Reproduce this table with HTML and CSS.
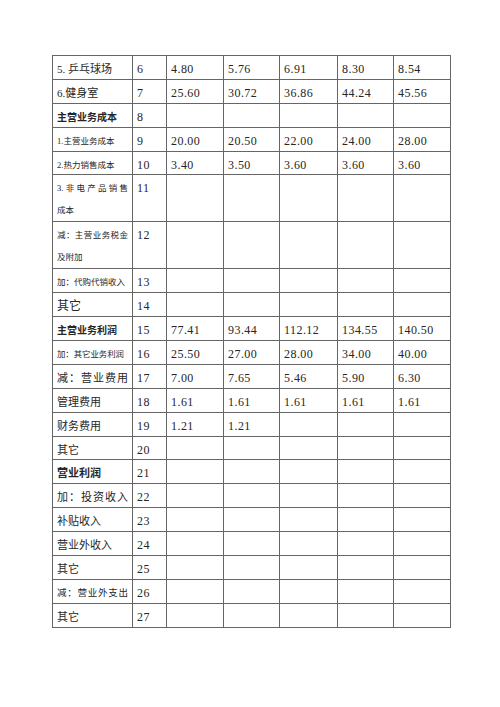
FILE: index.html
```html
<!DOCTYPE html>
<html lang="zh">
<head>
<meta charset="utf-8">
<link rel="stylesheet" href="styles.css">
</head>
<body>
<div class="page">
<table class="sheet">
<colgroup>
<col class="c-label"><col class="c-no"><col class="c-v1"><col class="c-v2"><col class="c-v3"><col class="c-v4"><col class="c-v5">
</colgroup>
<tbody>
<tr><td class="lbl t-md">5. 乒乓球场</td><td class="num">6</td><td class="num">4.80</td><td class="num">5.76</td><td class="num">6.91</td><td class="num">8.30</td><td class="num">8.54</td></tr>
<tr><td class="lbl t-md">6.健身室</td><td class="num">7</td><td class="num">25.60</td><td class="num">30.72</td><td class="num">36.86</td><td class="num">44.24</td><td class="num">45.56</td></tr>
<tr><td class="lbl t-b">主营业务成本</td><td class="num">8</td><td></td><td></td><td></td><td></td><td></td></tr>
<tr><td class="lbl t-sm">1.主营业务成本</td><td class="num">9</td><td class="num">20.00</td><td class="num">20.50</td><td class="num">22.00</td><td class="num">24.00</td><td class="num">28.00</td></tr>
<tr><td class="lbl t-sm">2.热力销售成本</td><td class="num">10</td><td class="num">3.40</td><td class="num">3.50</td><td class="num">3.60</td><td class="num">3.60</td><td class="num">3.60</td></tr>
<tr><td class="lbl t-sm tall"><span class="ln just">3.非电产品销售</span><span class="ln">成本</span></td><td class="num">11</td><td></td><td></td><td></td><td></td><td></td></tr>
<tr><td class="lbl t-sm tall"><span class="ln just">减：主营业务税金</span><span class="ln">及附加</span></td><td class="num">12</td><td></td><td></td><td></td><td></td><td></td></tr>
<tr><td class="lbl t-sm">加：代购代销收入</td><td class="num">13</td><td></td><td></td><td></td><td></td><td></td></tr>
<tr><td class="lbl t-xl">其它</td><td class="num">14</td><td></td><td></td><td></td><td></td><td></td></tr>
<tr><td class="lbl t-b">主营业务利润</td><td class="num">15</td><td class="num">77.41</td><td class="num">93.44</td><td class="num">112.12</td><td class="num">134.55</td><td class="num">140.50</td></tr>
<tr><td class="lbl t-xs">加：其它业务利润</td><td class="num">16</td><td class="num">25.50</td><td class="num">27.00</td><td class="num">28.00</td><td class="num">34.00</td><td class="num">40.00</td></tr>
<tr><td class="lbl t-md just1">减：营业费用</td><td class="num">17</td><td class="num">7.00</td><td class="num">7.65</td><td class="num">5.46</td><td class="num">5.90</td><td class="num">6.30</td></tr>
<tr><td class="lbl t-md">管理费用</td><td class="num">18</td><td class="num">1.61</td><td class="num">1.61</td><td class="num">1.61</td><td class="num">1.61</td><td class="num">1.61</td></tr>
<tr><td class="lbl t-md">财务费用</td><td class="num">19</td><td class="num">1.21</td><td class="num">1.21</td><td></td><td></td><td></td></tr>
<tr><td class="lbl t-md">其它</td><td class="num">20</td><td></td><td></td><td></td><td></td><td></td></tr>
<tr><td class="lbl t-b t-b-lg">营业利润</td><td class="num">21</td><td></td><td></td><td></td><td></td><td></td></tr>
<tr><td class="lbl t-md just1">加：投资收入</td><td class="num">22</td><td></td><td></td><td></td><td></td><td></td></tr>
<tr><td class="lbl t-md">补贴收入</td><td class="num">23</td><td></td><td></td><td></td><td></td><td></td></tr>
<tr><td class="lbl t-md">营业外收入</td><td class="num">24</td><td></td><td></td><td></td><td></td><td></td></tr>
<tr><td class="lbl t-md">其它</td><td class="num">25</td><td></td><td></td><td></td><td></td><td></td></tr>
<tr><td class="lbl t-s2 just1">减：营业外支出</td><td class="num">26</td><td></td><td></td><td></td><td></td><td></td></tr>
<tr><td class="lbl t-md">其它</td><td class="num">27</td><td></td><td></td><td></td><td></td><td></td></tr>
</tbody>
</table>
</div>
</body>
</html>
```
FILE: styles.css
```css
html, body {
  margin: 0;
  padding: 0;
  background: #ffffff;
}
.page {
  padding: 55px 0 0 52px;
}
.sheet {
  border-collapse: collapse;
  table-layout: fixed;
  width: 399px;
  color: #262626;
}
.c-label { width: 80px; }
.c-no { width: 34px; }
.c-v1 { width: 57px; }
.c-v2 { width: 56px; }
.c-v3 { width: 58px; }
.c-v4 { width: 56px; }
.c-v5 { width: 57px; }
.sheet td {
  border: 1px solid #666666;
  vertical-align: top;
  padding: 5px 4px 0 4px;
  height: 17.875px;
  line-height: 17.875px;
  white-space: nowrap;
  overflow: hidden;
}
.num {
  font-family: "Liberation Serif", serif;
  font-size: 12px;
  letter-spacing: 0.45px;
}
.lbl {
  font-family: "Liberation Serif", "Noto Sans CJK SC", sans-serif;
  padding-left: 5px;
}
.t-md { font-size: 11px; }
.t-xl { font-size: 12px; }
.t-sm { font-size: 8.5px; }
.t-xs { font-size: 8.4px; }
.t-s2 { font-size: 9.5px; }
.t-b {
  font-size: 10px;
  font-weight: 700;
}
.t-b-lg { font-size: 11px; }
.just1 {
  text-align: justify;
  text-align-last: justify;
}
.sheet td.tall {
  padding-top: 2px;
  line-height: 22px;
  height: 44px;
}
.ln {
  display: block;
}
.ln.just {
  text-align: justify;
  text-align-last: justify;
}
```
